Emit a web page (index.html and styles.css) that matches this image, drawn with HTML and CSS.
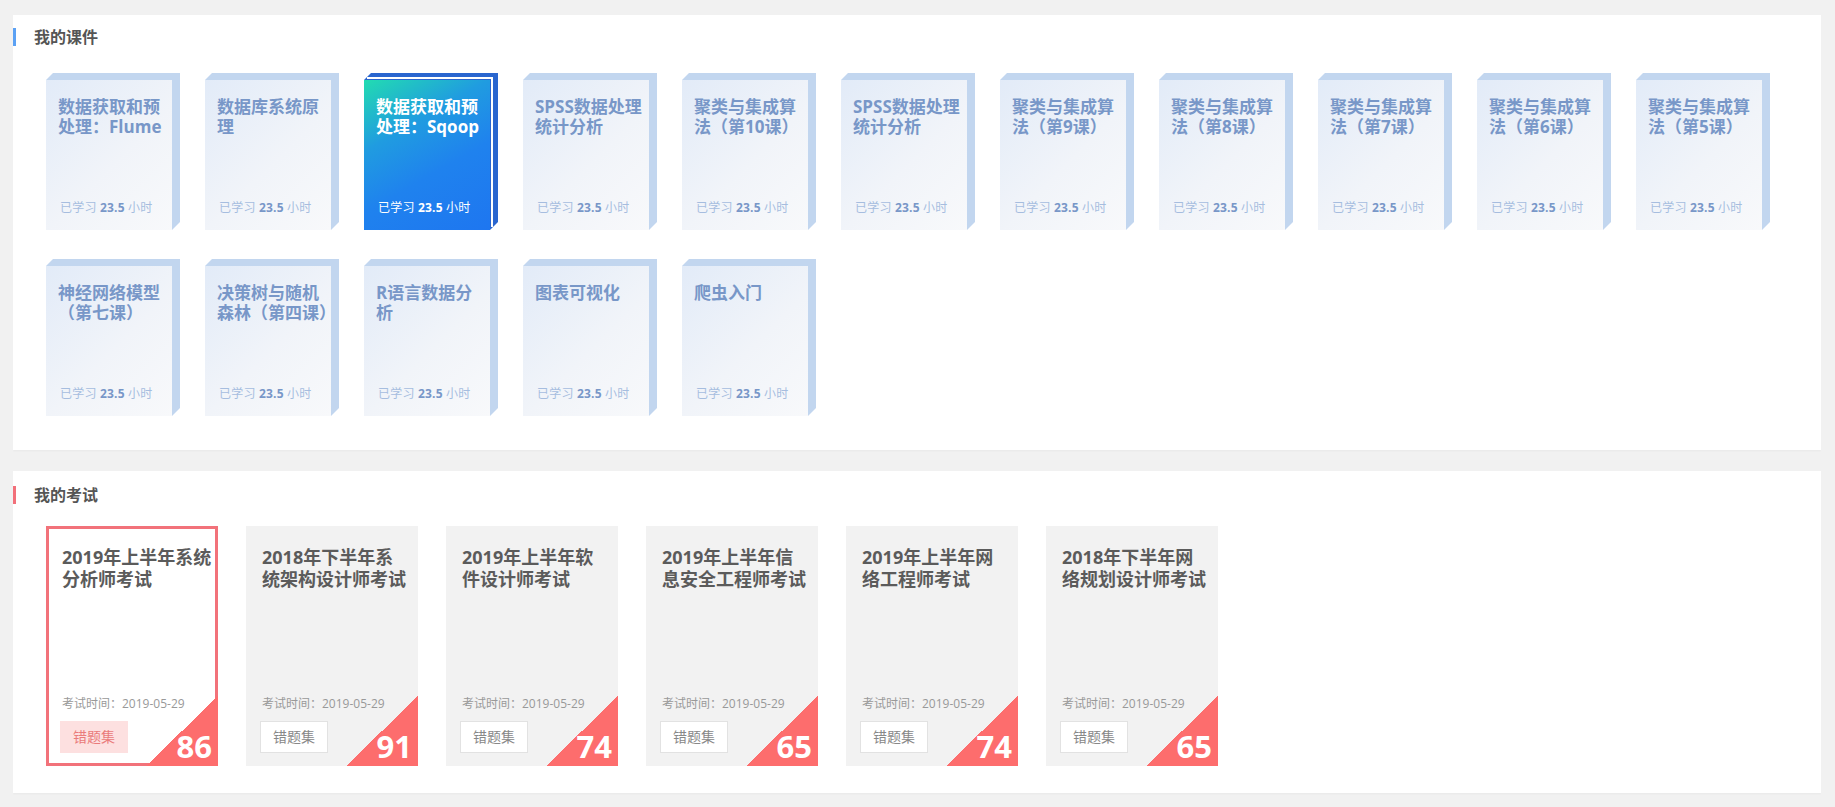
FILE: index.html
```html
<!DOCTYPE html>
<html>
<head>
  <meta charset="utf-8">
  <title>我的学习</title>
  <link rel="stylesheet" href="styles.css">
</head>
<body>
  <div class="panel">
    <h2 class="panel-title">我的课件</h2>
    <div class="books">
      <div class="book"><div class="book-face"><div class="book-name">数据获取和预<br>处理：Flume</div><div class="book-hours">已学习 <b>23.5</b> 小时</div></div></div>
      <div class="book"><div class="book-face"><div class="book-name">数据库系统原<br>理</div><div class="book-hours">已学习 <b>23.5</b> 小时</div></div></div>
      <div class="book current"><div class="book-face"><div class="book-name">数据获取和预<br>处理：Sqoop</div><div class="book-hours">已学习 <b>23.5</b> 小时</div></div></div>
      <div class="book"><div class="book-face"><div class="book-name">SPSS数据处理<br>统计分析</div><div class="book-hours">已学习 <b>23.5</b> 小时</div></div></div>
      <div class="book"><div class="book-face"><div class="book-name">聚类与集成算<br>法（第10课）</div><div class="book-hours">已学习 <b>23.5</b> 小时</div></div></div>
      <div class="book"><div class="book-face"><div class="book-name">SPSS数据处理<br>统计分析</div><div class="book-hours">已学习 <b>23.5</b> 小时</div></div></div>
      <div class="book"><div class="book-face"><div class="book-name">聚类与集成算<br>法（第9课）</div><div class="book-hours">已学习 <b>23.5</b> 小时</div></div></div>
      <div class="book"><div class="book-face"><div class="book-name">聚类与集成算<br>法（第8课）</div><div class="book-hours">已学习 <b>23.5</b> 小时</div></div></div>
      <div class="book"><div class="book-face"><div class="book-name">聚类与集成算<br>法（第7课）</div><div class="book-hours">已学习 <b>23.5</b> 小时</div></div></div>
      <div class="book"><div class="book-face"><div class="book-name">聚类与集成算<br>法（第6课）</div><div class="book-hours">已学习 <b>23.5</b> 小时</div></div></div>
      <div class="book"><div class="book-face"><div class="book-name">聚类与集成算<br>法（第5课）</div><div class="book-hours">已学习 <b>23.5</b> 小时</div></div></div>
      <div class="book"><div class="book-face"><div class="book-name">神经网络模型<br>（第七课）</div><div class="book-hours">已学习 <b>23.5</b> 小时</div></div></div>
      <div class="book"><div class="book-face"><div class="book-name">决策树与随机<br>森林（第四课）</div><div class="book-hours">已学习 <b>23.5</b> 小时</div></div></div>
      <div class="book"><div class="book-face"><div class="book-name">R语言数据分<br>析</div><div class="book-hours">已学习 <b>23.5</b> 小时</div></div></div>
      <div class="book"><div class="book-face"><div class="book-name">图表可视化</div><div class="book-hours">已学习 <b>23.5</b> 小时</div></div></div>
      <div class="book"><div class="book-face"><div class="book-name">爬虫入门</div><div class="book-hours">已学习 <b>23.5</b> 小时</div></div></div>
    </div>
  </div>

  <div class="panel exam-panel">
    <h2 class="panel-title red">我的考试</h2>
    <div class="exams">
      <div class="exam active">
        <div class="exam-name">2019年上半年系统<br>分析师考试</div>
        <div class="exam-date">考试时间：2019-05-29</div>
        <a class="exam-btn">错题集</a>
        <span class="score">86</span>
      </div>
      <div class="exam">
        <div class="exam-name">2018年下半年系<br>统架构设计师考试</div>
        <div class="exam-date">考试时间：2019-05-29</div>
        <a class="exam-btn">错题集</a>
        <span class="score">91</span>
      </div>
      <div class="exam">
        <div class="exam-name">2019年上半年软<br>件设计师考试</div>
        <div class="exam-date">考试时间：2019-05-29</div>
        <a class="exam-btn">错题集</a>
        <span class="score">74</span>
      </div>
      <div class="exam">
        <div class="exam-name">2019年上半年信<br>息安全工程师考试</div>
        <div class="exam-date">考试时间：2019-05-29</div>
        <a class="exam-btn">错题集</a>
        <span class="score">65</span>
      </div>
      <div class="exam">
        <div class="exam-name">2019年上半年网<br>络工程师考试</div>
        <div class="exam-date">考试时间：2019-05-29</div>
        <a class="exam-btn">错题集</a>
        <span class="score">74</span>
      </div>
      <div class="exam">
        <div class="exam-name">2018年下半年网<br>络规划设计师考试</div>
        <div class="exam-date">考试时间：2019-05-29</div>
        <a class="exam-btn">错题集</a>
        <span class="score">65</span>
      </div>
    </div>
  </div>
</body>
</html>
```

FILE: styles.css
```css
body {
  margin: 15px 14px 0 13px;
  background: #f1f1f1;
  font-family: "Open Sans", "Noto Sans CJK SC", sans-serif;
}

.panel {
  background: #fff;
  padding: 13px 0 34px 33px;
  margin-bottom: 21px;
  box-shadow: 0 1px 2px rgba(0, 0, 0, 0.04);
}

.exam-panel {
  padding-top: 15px;
  padding-bottom: 27px;
}

.panel-title {
  position: relative;
  margin: 0 0 27px -12px;
  padding-left: 0;
  font-size: 16px;
  line-height: 18px;
  font-weight: bold;
  color: #555;
}

.panel-title:before {
  content: "";
  position: absolute;
  left: -22px;
  top: 0;
  width: 4px;
  height: 18px;
  background: #5ba1f4;
}

.panel-title.red:before {
  background: #f2707a;
}

/* books */
.books {
  display: flex;
  flex-wrap: wrap;
  gap: 29px 25px;
}

.book {
  width: 134px;
  height: 157px;
  box-sizing: border-box;
  padding: 7px 8px 0 0;
  background: #c2d6ef;
  clip-path: polygon(7px 0, 100% 0, 100% 149px, 126px 100%, 0 100%, 0 7px);
}

.book-face {
  height: 150px;
  box-sizing: border-box;
  padding: 17px 4px 14px 12px;
  display: flex;
  flex-direction: column;
  justify-content: space-between;
  background: linear-gradient(135deg, #e2ebf8 0%, #f1f4f9 55%, #f8f9fb 100%);
}

.book-name {
  font-size: 17px;
  line-height: 20px;
  font-weight: bold;
  color: #7897c8;
  white-space: nowrap;
}

.book-hours {
  padding-left: 2px;
  font-size: 12px;
  line-height: 16px;
  color: #a6bddf;
  letter-spacing: 0.2px;
}

.book-hours b {
  color: #7897c8;
}

.book.current {
  background: #2a66cf;
}

.book.current .book-face {
  background: linear-gradient(150deg, #22dcb1 0%, #209ce0 32%, #1f82ee 60%, #1e76f0 100%);
  box-shadow: 1px -1px 0 #2a66cf, 3px -3px 0 #fff;
}

.book.current .book-name,
.book.current .book-hours,
.book.current .book-hours b {
  color: #fff;
}

/* exams */
.exams {
  display: flex;
  gap: 28px;
  margin-top: -5px;
}

.exam {
  position: relative;
  width: 172px;
  height: 240px;
  box-sizing: border-box;
  padding: 20px 16px 13px;
  display: flex;
  flex-direction: column;
  background: #f2f2f2;
}

.exam.active {
  background: #fff;
  border: 3px solid #f2727a;
  padding: 17px 13px 10px;
}

.exam-name {
  flex: 1;
  font-size: 18px;
  line-height: 22px;
  font-weight: bold;
  color: #5b5b5b;
  white-space: nowrap;
}

.exam-date {
  font-size: 12px;
  line-height: 16px;
  color: #999;
  margin-bottom: 9px;
}

.exam-btn {
  width: 66px;
  height: 30px;
  margin-left: -2px;
  border: 1px solid #e2e2e2;
  background: #fff;
  font-size: 14px;
  line-height: 30px;
  text-align: center;
  color: #888;
  cursor: pointer;
}

.exam.active .exam-btn {
  background: #fde0e0;
  border-color: #fde0e0;
  color: #ea7b7b;
}

.exam:after {
  content: "";
  position: absolute;
  right: 0;
  bottom: 0;
  width: 72px;
  height: 70px;
  background: linear-gradient(to top left, #fd6d6d 50%, transparent 50%);
}

.exam.active:after {
  right: -3px;
  bottom: -3px;
}

.score {
  position: absolute;
  right: 6px;
  bottom: 2px;
  z-index: 1;
  font-size: 31px;
  line-height: 36px;
  font-weight: bold;
  color: #fff;
}

.exam.active .score {
  right: 3px;
  bottom: -1px;
}
```
